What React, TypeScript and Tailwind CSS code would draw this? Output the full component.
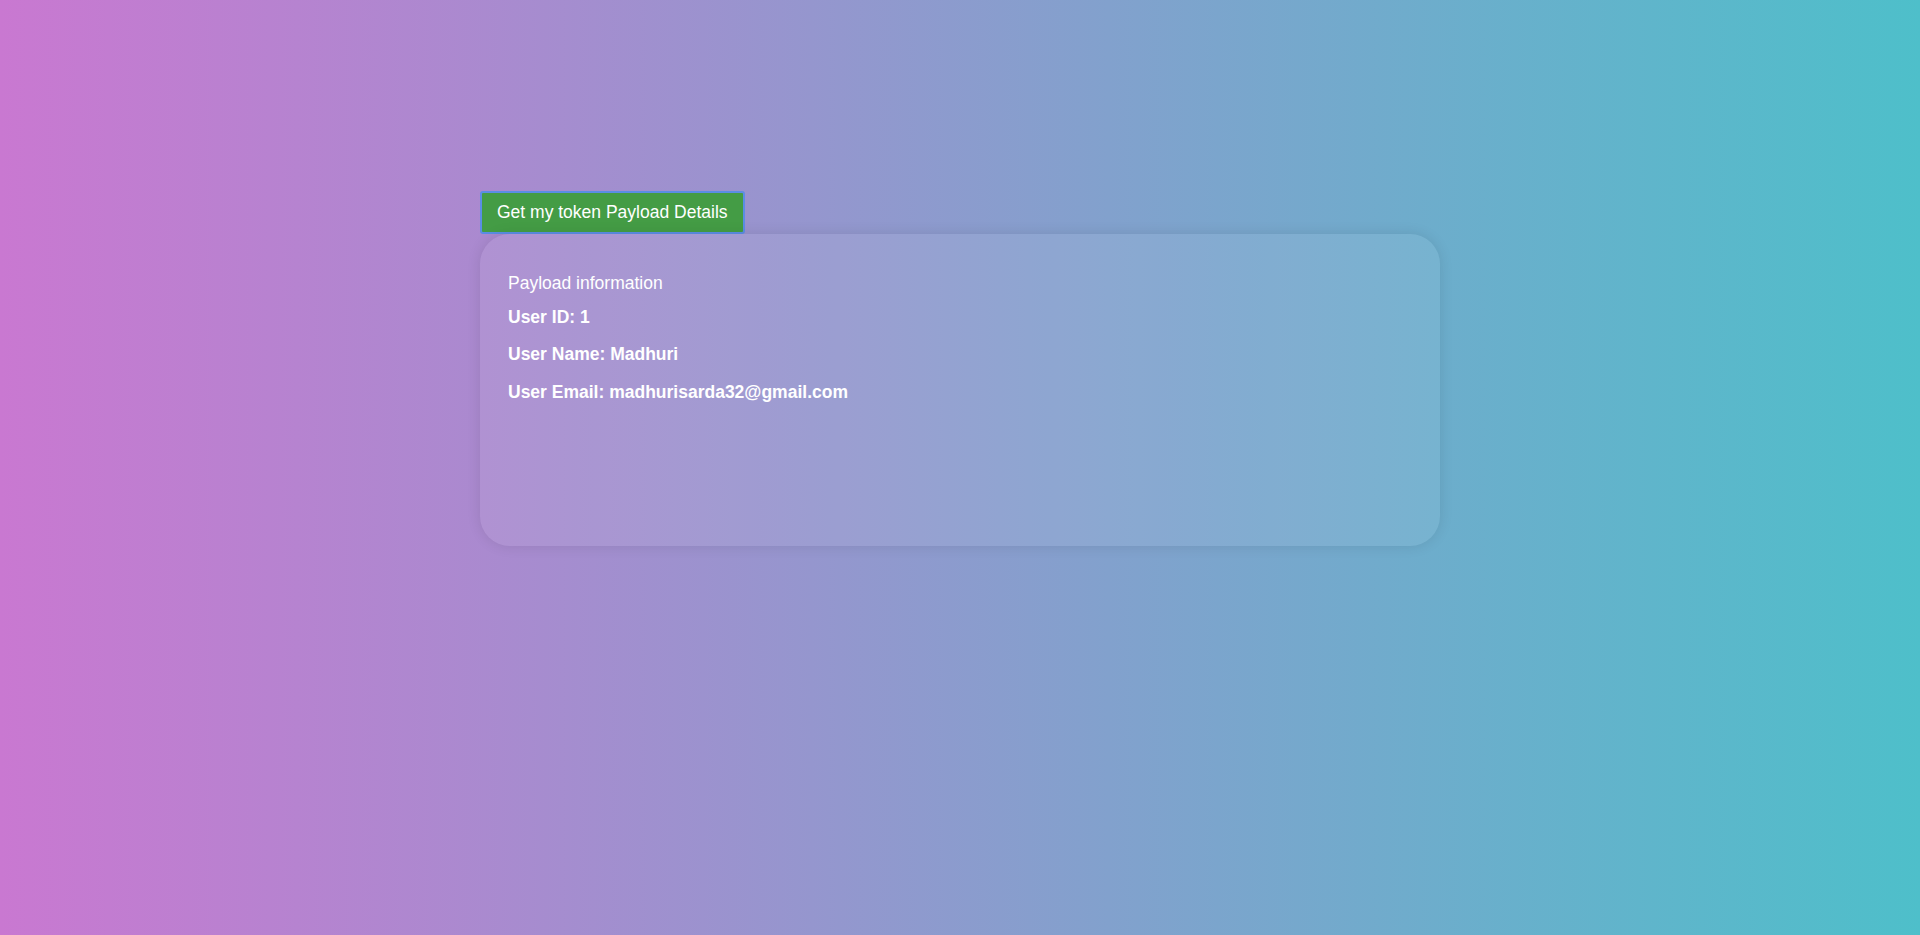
import React from 'react';

export default function App() {
    const payload = {
        id: 1,
        name: 'Madhuri',
        email: 'madhurisarda32@gmail.com'
    };

    return (
        <div
            className="min-h-[935px] w-full bg-[linear-gradient(to_right,#c978d1,#4ebfca)] text-white"
            style={{ fontFamily: '"Liberation Sans", Arial, sans-serif' }}
        >
            <div className="flex flex-col items-start pt-[191px] px-[480px]">
                {/* Fetch button */}
                <button className="h-[43px] px-[15px] bg-[#449c45] border-2 border-[#5b8de4] rounded-[3px] text-[17.5px] text-white leading-none">
                    Get my token Payload Details
                </button>

                {/* Payload card */}
                <div className="w-[960px] h-[312px] rounded-[30px] bg-white/[0.07] shadow-[0_0_14px_rgba(0,0,0,0.1)] pt-[39px] pl-[28px] pr-[28px]">
                    <div className="text-[17.5px] leading-[1.15]">Payload information</div>
                    <p className="mt-[13.5px] text-[17.5px] font-bold leading-[1.15]">User ID: {payload.id}</p>
                    <p className="mt-[17.5px] text-[17.5px] font-bold leading-[1.15]">User Name: {payload.name}</p>
                    <p className="mt-[17.5px] text-[17.5px] font-bold leading-[1.15]">User Email: {payload.email}</p>
                </div>
            </div>
        </div>
    );
}
